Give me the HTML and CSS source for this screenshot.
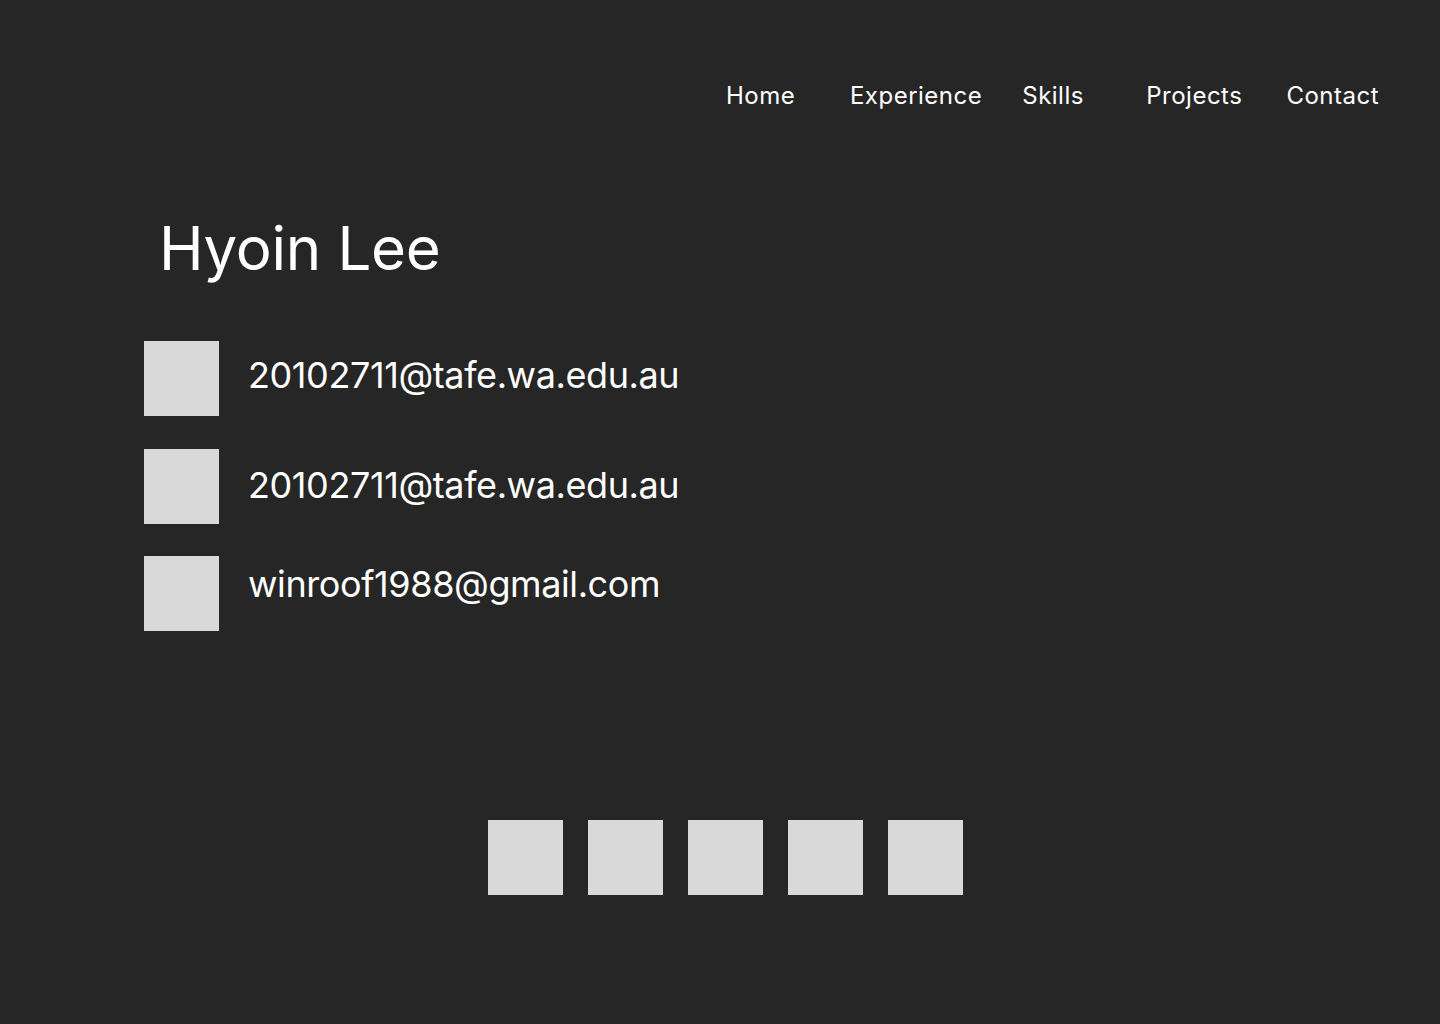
FILE: index.html
```html
<!DOCTYPE html>
<html lang="en">
<head>
<meta charset="utf-8">
<title>Hyoin Lee - Contact</title>
<link rel="stylesheet" href="styles.css">
</head>
<body>
<header class="header">
  <nav class="nav">
    <a class="nav-item" href="#">Home</a>
    <a class="nav-item nav-item-tight" href="#">Experience</a>
    <a class="nav-item" href="#">Skills</a>
    <a class="nav-item" href="#">Projects</a>
    <a class="nav-item" href="#">Contact</a>
  </nav>
</header>
<main class="main">
  <h1 class="name">Hyoin Lee</h1>
  <ul class="contacts">
    <li class="contact-row row-1"><span class="icon-box"></span><span class="contact-text">20102711@tafe.wa.edu.au</span></li>
    <li class="contact-row row-2"><span class="icon-box"></span><span class="contact-text">20102711@tafe.wa.edu.au</span></li>
    <li class="contact-row row-3"><span class="icon-box"></span><span class="contact-text">winroof1988@gmail.com</span></li>
  </ul>
  <div class="socials">
    <span class="social-box"></span>
    <span class="social-box"></span>
    <span class="social-box"></span>
    <span class="social-box"></span>
    <span class="social-box"></span>
  </div>
</main>
</body>
</html>
```
FILE: styles.css
```css
* { box-sizing: border-box; }
html, body {
  margin: 0;
  padding: 0;
  background: #262626;
  color: #ffffff;
  font-family: Inter, "Noto Sans", "Liberation Sans", sans-serif;
}
body { min-height: 1024px; }

.header {
  display: flex;
  justify-content: flex-end;
  padding: 81px 61px 0 0;
}
.nav {
  display: flex;
  gap: 44px;
}
.nav-item {
  min-width: 80px;
  font-size: 24px;
  line-height: 29px;
  letter-spacing: 0.5px;
  color: #ffffff;
  text-decoration: none;
}
.nav-item-tight { margin-right: -4px; }

.main {
  padding-left: 144px;
}
.name {
  margin: 102px 0 0 0;
  padding-left: 15px;
  font-size: 60px;
  line-height: 73px;
  font-weight: 400;
  letter-spacing: -0.3px;
}

.contacts {
  list-style: none;
  margin: 56px 0 0 0;
  padding: 0;
  display: flex;
  flex-direction: column;
  gap: 33px;
}
.contact-row {
  display: flex;
  align-items: flex-start;
  gap: 29px;
}
.icon-box {
  width: 75px;
  height: 75px;
  flex: none;
  background: #d9d9d9;
}
.contact-text {
  font-size: 36px;
  line-height: 44px;
  letter-spacing: -0.4px;
  padding-top: 12px;
}
.row-2 .contact-text { padding-top: 14px; }
.row-3 { margin-top: -1px; }
.row-3 .contact-text { padding-top: 6px; }

.socials {
  display: flex;
  justify-content: center;
  gap: 25px;
  margin: 189px 0 0 -133px;
}
.social-box {
  width: 75px;
  height: 75px;
  background: #d9d9d9;
}
```
